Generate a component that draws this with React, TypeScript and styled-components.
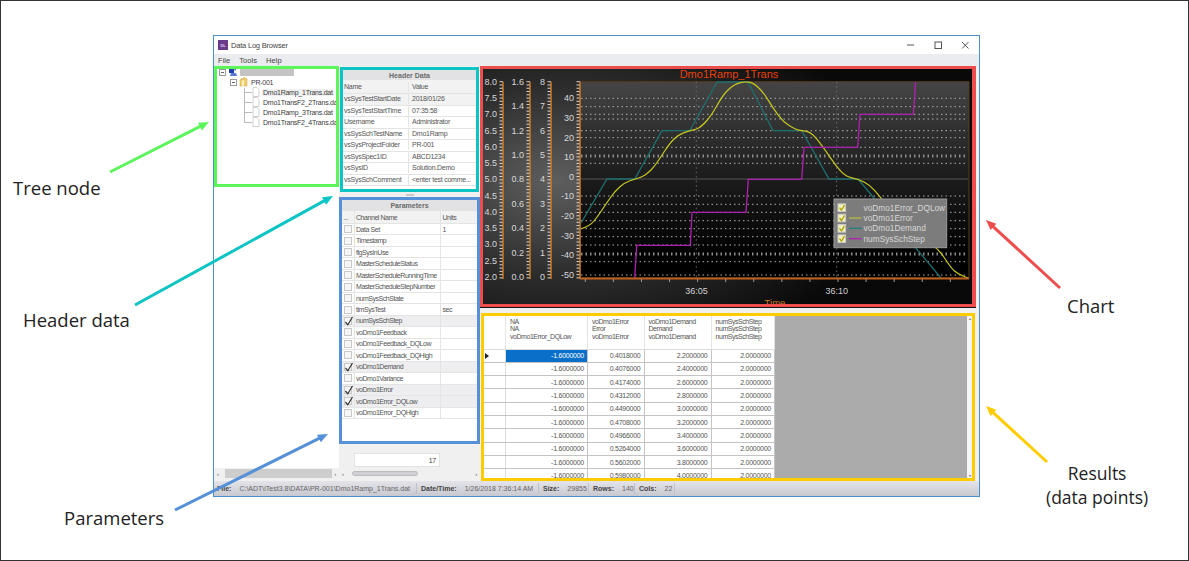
import { ReactElement } from 'react';
import styled, { createGlobalStyle } from 'styled-components';

const HEADER_ROWS = [
  ['vsSysTestStartDate', '2018/01/26'],
  ['vsSysTestStartTime', '07:35:58'],
  ['Username', 'Administrator'],
  ['vsSysSchTestName', 'Dmo1Ramp'],
  ['vsSysProjectFolder', 'PR-001'],
  ['vsSysSpec1ID', 'ABCD1234'],
  ['vsSysID', 'Solution.Demo'],
  ['vsSysSchComment', '<enter test comme...']
];

const PARAMETERS: { name: string; units?: string; checked?: boolean }[] = [
  { name: 'Data Set', units: '1' },
  { name: 'Timestamp' },
  { name: 'flgSysInUse' },
  { name: 'MasterScheduleStatus' },
  { name: 'MasterScheduleRunningTime' },
  { name: 'MasterScheduleStepNumber' },
  { name: 'numSysSchState' },
  { name: 'timSysTest', units: 'sec' },
  { name: 'numSysSchStep', checked: true },
  { name: 'voDmo1Feedback' },
  { name: 'voDmo1Feedback_DQLow' },
  { name: 'voDmo1Feedback_DQHigh' },
  { name: 'voDmo1Demand', checked: true },
  { name: 'voDmo1Variance' },
  { name: 'voDmo1Error', checked: true },
  { name: 'voDmo1Error_DQLow', checked: true },
  { name: 'voDmo1Error_DQHigh' }
];

const FILES = [
  'Dmo1Ramp_1Trans.dat',
  'Dmo1TransF2_2Trans.dat',
  'Dmo1Ramp_3Trans.dat',
  'Dmo1TransF2_4Trans.dat'
];

const ERRORS = ['0.4018000', '0.4076000', '0.4174000', '0.4312000', '0.4490000', '0.4708000', '0.4966000', '0.5264000', '0.5602000', '0.5980000'];
const DEMANDS = ['2.2000000', '2.4000000', '2.6000000', '2.8000000', '3.0000000', '3.2000000', '3.4000000', '3.6000000', '3.8000000', '4.0000000'];

const GlobalStyle = createGlobalStyle`
  html, body { margin: 0; padding: 0; background: #fff; }
  * { box-sizing: border-box; }
`;

const Stage = styled.div`
  position: relative;
  width: 1189px;
  height: 561px;
  padding: 34px 0 0 212px;
  border: 1px solid #333;
  background: #fff;
  overflow: hidden;
`;

const Window = styled.div`
  display: flex;
  flex-direction: column;
  width: 767px;
  height: 462px;
  border: 1px solid #4a90d0;
  background: #f0f0f0;
  font-family: 'Liberation Sans', Arial, sans-serif;
  font-size: 7px;
  letter-spacing: -0.25px;
  color: #555;
`;

const TitleBar = styled.div`
  display: flex;
  align-items: center;
  height: 18px;
  padding-left: 4px;
  background: #fff;
  font-size: 7.5px;
  letter-spacing: -0.2px;
  color: #444;
`;

const AppIcon = styled.div`
  display: flex;
  align-items: center;
  justify-content: center;
  width: 10px;
  height: 10px;
  margin-right: 3px;
  background: #6a3a8c;
  color: #e6d0f0;
  font-size: 4px;
  font-weight: bold;
`;

const WindowButtons = styled.div`
  display: flex;
  align-items: center;
  gap: 19.5px;
  margin-left: auto;
  padding-right: 10px;
`;

const MenuBar = styled.div`
  display: flex;
  gap: 9px;
  align-items: center;
  height: 12px;
  padding-left: 4px;
  background: #ebecf0;
  font-size: 7.6px;
  letter-spacing: 0;
  color: #444;
`;

const Body = styled.div`
  flex: 1;
  display: grid;
  grid-template-columns: 125px 141px 1fr;
  min-height: 0;
`;

const TreePane = styled.div`
  display: flex;
  flex-direction: column;
  background: #fff;
`;

const TreeBox = styled.div`
  height: 121px;
  border: 3px solid #5cf55c;
  overflow: hidden;
  white-space: nowrap;
`;

const TreeList = styled.div`
  margin-top: -2px;
`;

const TreeRow = styled.div<{ $level: number }>`
  position: relative;
  display: flex;
  align-items: center;
  gap: 2px;
  height: 10px;
  padding-left: ${(p) => p.$level}px;
  color: #3c3c3c;
  svg { flex-shrink: 0; }
`;

const TreeLabel = styled.span<{ $selected?: boolean }>`
  background: ${(p) => (p.$selected ? '#f0f0f0' : 'transparent')};
  padding: 0 1px;
`;

const Redacted = styled.div`
  width: 54px;
  height: 7px;
  margin-left: 1px;
  background: #c4c4c4;
`;

const TreeFill = styled.div`
  flex: 1;
`;

const ScrollBar = styled.div`
  display: flex;
  align-items: center;
  justify-content: space-between;
  height: 13px;
  padding: 0 3px 2px;
  background: #f0f0f0;
  color: #555;
  font-size: 6px;
`;

const ScrollThumb = styled.div<{ $width: number; $offset: number }>`
  width: ${(p) => p.$width}px;
  height: 9px;
  margin-right: auto;
  margin-left: ${(p) => p.$offset}px;
  background: #cdcdcd;
`;

const RoundThumb = styled(ScrollThumb)`
  height: 5px;
  border-radius: 3px;
  background: #d0d0d8;
  border: 1px solid #bbb;
`;

const MiddlePane = styled.div`
  display: flex;
  flex-direction: column;
  padding-top: 1px;
`;

const HeaderBox = styled.div`
  height: 125px;
  margin: 0 1px 0 1px;
  border: 3px solid #0cc4c4;
  background: #fff;
  overflow: hidden;
`;

const PanelTitle = styled.div<{ $height: number }>`
  display: flex;
  align-items: center;
  justify-content: center;
  height: ${(p) => p.$height}px;
  background: #e2e2e4;
  font-weight: bold;
  letter-spacing: 0;
  color: #6a6a6a;
`;

const HeadGrid = styled.div<{ $header?: boolean; $shaded?: boolean }>`
  display: grid;
  grid-template-columns: 65px 1fr;
  height: ${(p) => (p.$header ? '14px' : '11.5px')};
  align-items: center;
  border-bottom: 1px solid #e4e4e4;
  background: ${(p) => (p.$header || p.$shaded ? '#f2f2f2' : '#fff')};
  white-space: nowrap;
  span { padding-left: 1px; overflow: hidden; line-height: 10px; }
  span + span { padding-left: 3px; border-left: 1px solid #e4e4e4; }
`;

const Splitter = styled.div`
  display: flex;
  align-items: center;
  justify-content: center;
  height: 5px;
  &::after {
    content: '';
    width: 8px;
    height: 2px;
    background: #c8c8c8;
  }
`;

const ParamBox = styled.div`
  height: 247px;
  border: 3px solid #5590d8;
  background: #fff;
  overflow: hidden;
`;

const ParamGrid = styled.div<{ $header?: boolean; $checked?: boolean }>`
  display: grid;
  grid-template-columns: 11.5px 86.5px 1fr;
  align-items: center;
  height: ${(p) => (p.$header ? '13px' : '11.47px')};
  border-bottom: 1px solid #e4e4e4;
  background: ${(p) => (p.$header ? '#f2f2f2' : p.$checked ? '#eeeef0' : '#fff')};
  letter-spacing: -0.45px;
  white-space: nowrap;
  > * { height: 100%; display: flex; align-items: center; padding-left: 1.5px; }
  > * + * { border-left: 1px solid #e4e4e4; }
`;

const CheckCell = styled.div`
  justify-content: center;
  padding-left: 0 !important;
`;

const CheckBox = styled.div`
  width: 8px;
  height: 8px;
  border: 1px solid #c8c8c8;
  background: #f6f6f6;
  overflow: visible;
`;

const ParamFooter = styled.div`
  flex: 1;
  display: flex;
  flex-direction: column;
  justify-content: flex-end;
`;

const CountField = styled.div`
  width: 86px;
  height: 14px;
  margin: 0 0 1px 15px;
  padding: 3px 3px 0 0;
  background: #fff;
  border: 1px solid #e2e2e2;
  text-align: right;
  color: #444;
`;

const RightPane = styled.div`
  display: flex;
  flex-direction: column;
`;

const ChartBox = styled.div`
  width: 496px;
  height: 241px;
  border-style: solid;
  border-color: #ee4d4d;
  border-width: 3px 4px 3px 3px;
  background: radial-gradient(ellipse 330px 190px at 72px 112px, #5e5e5e 0%, #2c2c2c 50%, #090909 100%);
  box-shadow: 0 1px 0 #111;
  letter-spacing: 0;
  svg { display: block; }
`;

const DataBox = styled.div`
  display: flex;
  width: 494px;
  height: 168px;
  margin: 6px 0 0 1px;
  border-style: solid;
  border-color: #ffcc00;
  border-width: 3px;
  background: #ababab;
`;

const DataTable = styled.div`
  width: 291px;
  height: 100%;
  background: #fff;
  overflow: hidden;
`;

const DataRow = styled.div<{ $header?: boolean }>`
  display: grid;
  grid-template-columns: 22px 82px 56.5px 67px 63.5px;
  height: ${(p) => (p.$header ? '33.5px' : '13.3px')};
  border-bottom: 1px solid ${(p) => (p.$header ? '#dcdcdc' : '#c4c4c4')};
`;

const DataCell = styled.div<{ $selected?: boolean }>`
  display: flex;
  align-items: center;
  justify-content: flex-end;
  padding-right: 3px;
  border-right: 1px solid #c4c4c4;
  background: ${(p) => (p.$selected ? '#0a6fc9' : '#fff')};
  color: ${(p) => (p.$selected ? '#fff' : '#555')};
`;

const RowMarker = styled(DataCell)`
  justify-content: flex-start;
  padding-left: 1px;
  border-right: 1px solid #dcdcdc;
`;

const HeaderCell = styled.div`
  padding: 1.5px 0 0 4px;
  border-right: 1px solid #e4e4e4;
  line-height: 7.7px;
  letter-spacing: -0.45px;
  white-space: nowrap;
  background: #fff;
`;

const VerticalBar = styled.div`
  display: flex;
  flex-direction: column;
  justify-content: space-between;
  align-items: center;
  width: 5px;
  margin-left: auto;
  background: #f4f4f4;
  color: #666;
  font-size: 4px;
`;

const StatusBar = styled.div`
  display: flex;
  align-items: center;
  height: 15px;
  background: linear-gradient(#e4e4ea, #c8c8d0);
  color: #666;
  letter-spacing: 0;
  white-space: nowrap;
`;

const StatusItem = styled.div<{ $width: number }>`
  display: flex;
  gap: 8px;
  width: ${(p) => p.$width}px;
  height: 11px;
  align-items: center;
  padding-left: 4px;
  border-right: 1px solid #c0c0c8;
  b { color: #444; }
  &:first-child { padding-left: 3px; }
`;

const Overlay = styled.svg`
  position: absolute;
  inset: 0;
  pointer-events: none;
`;

const Callout = styled.div<{ $x: number; $y: number; $center?: boolean; $size?: number }>`
  position: absolute;
  left: ${(p) => p.$x}px;
  top: ${(p) => p.$y}px;
  font-family: 'Open Sans', sans-serif;
  font-size: ${(p) => p.$size ?? 18.5}px;
  line-height: 24px;
  color: #222;
  text-align: ${(p) => (p.$center ? 'center' : 'left')};
  white-space: nowrap;
`;

// rounds a list of page points into a path through their midpoints
const smooth = (pts: number[][]): string => {
  let d = `M${pts[0][0]} ${pts[0][1]}`;
  for (let i = 1; i < pts.length - 1; i++) {
    const mx = (pts[i][0] + pts[i + 1][0]) / 2;
    const my = (pts[i][1] + pts[i + 1][1]) / 2;
    d += ` Q${pts[i][0]} ${pts[i][1]} ${mx} ${my}`;
  }
  const last = pts[pts.length - 1];
  return `${d} L${last[0]} ${last[1]}`;
};

const ERROR_CURVE = [
  [581, 228.7], [590, 226], [598, 216], [606, 204], [615, 191], [625, 182.5], [635, 179], [642, 177], [648, 173],
  [654, 167], [660, 158], [670, 143], [678, 135], [689, 130.7], [696, 129.5], [702, 126], [711, 116], [723, 95],
  [731, 87], [738, 83], [745, 81.7], [753, 82.7], [763, 91.7], [773, 108], [783, 121.7], [796, 130], [804, 130.7],
  [812, 133], [823, 146.7], [836, 166], [846, 176.7], [858, 179], [870, 185], [880, 196.7], [900, 222], [920, 238],
  [938, 248], [951, 268], [958, 274], [968, 278]
];

const DEMAND_LINE = '581,223 607,179 634.7,179 662,130.7 689.7,130.7 717.3,82 748,82 773,130.7 801.7,130.7 829,179 858,179 941,278';
const STEP_LINE = '634.7,278 636.7,245.3 690.3,245.3 692,212.3 746,212.3 748.3,179.3 801.7,179.3 804,147.3 857.7,147.3 860,114.3 913.3,114.3 915.7,82';

const DOT_ROWS = [98.3, 106.7, 114.3, 119, 130.7, 137.7, 147.3, 163.3, 196, 204.3, 212.3, 220.7, 228.7, 236.7, 245, 261.7, 275];
const BOLD_ROWS = [156, 254];

const SCALES: { x: number; labels: string[] }[] = [
  { x: 503, labels: ['8.0', '7.5', '7.0', '6.5', '6.0', '5.5', '5.0', '4.5', '4.0', '3.5', '3.0', '2.5', '2.0'] },
  { x: 530, labels: ['1.6', '1.4', '1.2', '1.0', '0.8', '0.6', '0.4', '0.2', '0.0'] },
  { x: 551, labels: ['8', '7', '6', '5', '4', '3', '2', '1', '0'] }
];
const Y_LABELS = [40, 30, 20, 10, 0, -10, -20, -30, -40, -50];
const PLOT_TOP = 81.7;
const PLOT_BOTTOM = 278;

const AxisTicks = ({ x }: { x: number }): ReactElement => {
  const ticks = [];
  for (let y = PLOT_TOP; y <= PLOT_BOTTOM + 0.5; y += 3.27) {
    ticks.push(<line key={y} x1={x - 3.5} x2={x} y1={y} y2={y} stroke="#d8d8d8" strokeWidth="1" />);
  }
  return (
    <g>
      {ticks}
      <line x1={x} x2={x} y1={PLOT_TOP} y2={PLOT_BOTTOM + 1} stroke="#d07a20" strokeWidth="1.5" />
    </g>
  );
};

const ChartDrawing = (): ReactElement => (
  <svg width="489" height="235" viewBox="483 69 489 235" fontFamily="'Liberation Sans', Arial, sans-serif">
    <defs>
      <linearGradient id="plotFill" x1="0" y1="0" x2="0" y2="1">
        <stop offset="0" stopColor="#454545" />
        <stop offset="0.45" stopColor="#1f1f1f" />
        <stop offset="0.9" stopColor="#000" />
      </linearGradient>
    </defs>
    <text x="729" y="78" textAnchor="middle" fontSize="11" fill="#e8410a">Dmo1Ramp_1Trans</text>

    {SCALES.map((s) => (
      <g key={s.x}>
        <AxisTicks x={s.x} />
        {s.labels.map((label, i) => (
          <text
            key={label}
            x={s.x - 6}
            y={PLOT_TOP + 3 + (i * (PLOT_BOTTOM - PLOT_TOP - 1)) / (s.labels.length - 1)}
            textAnchor="end"
            fontSize="9"
            fill="#d8d8d8"
          >
            {label}
          </text>
        ))}
      </g>
    ))}

    <rect x="580" y={PLOT_TOP} width="389" height={PLOT_BOTTOM - PLOT_TOP} fill="url(#plotFill)" stroke="#5a3c1c" />
    <AxisTicks x={580} />
    {Y_LABELS.map((v) => (
      <text key={v} x="574" y={176.7 - 1.96 * v + 3} textAnchor="end" fontSize="9" fill="#d8d8d8">{v}</text>
    ))}

    {DOT_ROWS.map((y) => (
      <line key={y} x1="581" x2="968" y1={y} y2={y} stroke="#b0b0b0" strokeWidth="1" strokeDasharray="1.5 3" />
    ))}
    {BOLD_ROWS.map((y) => (
      <line key={y} x1="581" x2="968" y1={y} y2={y} stroke="#8c8c8c" strokeWidth="3" strokeDasharray="1.5 3" />
    ))}
    <line x1="581" x2="968" y1="179" y2="179" stroke="#555" />
    {[696.3, 836.7].map((x) => (
      <line key={x} x1={x} x2={x} y1={PLOT_TOP} y2={PLOT_BOTTOM} stroke="#6a6a6a" strokeDasharray="1.5 3" />
    ))}

    <polyline points={DEMAND_LINE} fill="none" stroke="#1f6e6e" strokeWidth="1.3" />
    <path d={smooth(ERROR_CURVE)} fill="none" stroke="#c8c820" strokeWidth="1.2" />
    <polyline points={STEP_LINE} fill="none" stroke="#b020b0" strokeWidth="1.3" />

    <line x1="580" x2="969" y1="278.5" y2="278.5" stroke="#c0601e" strokeWidth="2" />
    {Array.from({ length: 14 }, (_, i) => 585.3 + i * 28.08).map((x) => (
      <line key={x} x1={x} x2={x} y1="279" y2="282" stroke="#999" />
    ))}
    <text x="696.5" y="294" textAnchor="middle" fontSize="9" fill="#d0d0d0">36:05</text>
    <text x="836.7" y="294" textAnchor="middle" fontSize="9" fill="#d0d0d0">36:10</text>
    <text x="775" y="306" textAnchor="middle" fontSize="9.5" fill="#d07a20">Time</text>

    <rect x="834" y="199" width="112.7" height="48.7" fill="#7c7c7c" stroke="#9a9a9a" />
    {[
      { name: 'voDmo1Error_DQLow', color: 'none' },
      { name: 'voDmo1Error', color: '#b8b840' },
      { name: 'voDmo1Demand', color: '#1f8080' },
      { name: 'numSysSchStep', color: '#b020b0' }
    ].map((item, i) => {
      const y = 207.7 + i * 10.33;
      return (
        <g key={item.name}>
          <rect x="838" y={y - 3.8} width="7.6" height="7.6" fill="#f0f0c0" stroke="#c8c8c8" />
          <path d={`M839.5 ${y} l2 2.5 l3 -5`} fill="none" stroke="#b0a000" strokeWidth="1.3" />
          <line x1="849" x2="861.5" y1={y} y2={y} stroke={item.color} strokeWidth="1.3" />
          <text x="863.5" y={y + 3} fontSize="8.3" fill="#d8d8d8">{item.name}</text>
        </g>
      );
    })}
  </svg>
);

const Expander = (): ReactElement => (
  <svg width="7" height="7" viewBox="0 0 7 7">
    <rect x="0.5" y="0.5" width="6" height="6" fill="#fff" stroke="#999" />
    <line x1="2" x2="5" y1="3.5" y2="3.5" stroke="#666" />
  </svg>
);

const Computer = (): ReactElement => (
  <svg width="9" height="9" viewBox="0 0 9 9">
    <path d="M1 1h5v4H1z" fill="#1c3fb0" />
    <path d="M3 5h5l1 3H2z" fill="#5a78d8" />
    <path d="M6 0l2 1-1 2z" fill="#16247a" />
  </svg>
);

const Folder = (): ReactElement => (
  <svg width="9" height="10" viewBox="0 0 9 10">
    <path d="M1 9V3l2-2 1 2 1-3 3 2v7z" fill="#f0cf6c" stroke="#c9a040" strokeWidth="0.5" />
    <path d="M3 9V4l2-1v6z" fill="#fff2c0" />
  </svg>
);

const FileIcon = (): ReactElement => (
  <svg width="8" height="10" viewBox="0 0 8 10">
    <path d="M1 0.5h4l2 2v7H1z" fill="#fff" stroke="#d0d0d0" />
  </svg>
);

const Tick = (): ReactElement => (
  <svg width="8" height="8" viewBox="0 0 8 8" style={{ display: 'block', overflow: 'visible' }}>
    <path d="M0.5 4 L2.8 6.8 L7.5 -1" fill="none" stroke="#333" strokeWidth="1.2" />
  </svg>
);

const Connector = styled.span<{ $x: number; $h: number }>`
  position: absolute;
  left: ${(p) => p.$x}px;
  bottom: 4.5px;
  width: 8px;
  height: ${(p) => p.$h}px;
  border-left: 1px solid #bbb;
  border-bottom: 1px solid #bbb;
`;

const Arrow = ({ x1, y1, x2, y2, color }: { x1: number; y1: number; x2: number; y2: number; color: string }): ReactElement => {
  const a = Math.atan2(y2 - y1, x2 - x1);
  const len = 11;
  const p = (t: number) => `${x2 - len * Math.cos(a + t)},${y2 - len * Math.sin(a + t)}`;
  return (
    <g>
      <line x1={x1} y1={y1} x2={x2 - 6 * Math.cos(a)} y2={y2 - 6 * Math.sin(a)} stroke={color} strokeWidth="3" />
      <polygon points={`${x2},${y2} ${p(0.4)} ${p(-0.4)}`} fill={color} />
    </g>
  );
};

const App = (): ReactElement => (
  <Stage>
    <GlobalStyle />
    <Window>
      <TitleBar>
        <AppIcon>DL</AppIcon>
        Data Log Browser
        <WindowButtons>
          <svg width="8" height="8" viewBox="0 0 8 8"><path d="M1 4h7" stroke="#555" /></svg>
          <svg width="8" height="8" viewBox="0 0 8 8"><rect x="1" y="1" width="6.5" height="6.5" fill="none" stroke="#555" /></svg>
          <svg width="8" height="8" viewBox="0 0 8 8"><path d="M1 1l6.5 6.5M7.5 1L1 7.5" stroke="#555" /></svg>
        </WindowButtons>
      </TitleBar>
      <MenuBar>
        <span>File</span>
        <span>Tools</span>
        <span>Help</span>
      </MenuBar>
      <Body>
        <TreePane>
          <TreeBox>
            <TreeList>
              <TreeRow $level={2}>
                <Expander />
                <Computer />
                <Redacted />
              </TreeRow>
              <TreeRow $level={13}>
                <Expander />
                <Folder />
                <TreeLabel>PR-001</TreeLabel>
              </TreeRow>
              {FILES.map((file, i) => (
                <TreeRow key={file} $level={35}>
                  <Connector $x={27} $h={i === 0 ? 5 : 10} />
                  <FileIcon />
                  <TreeLabel $selected={i === 0}>{file}</TreeLabel>
                </TreeRow>
              ))}
            </TreeList>
          </TreeBox>
          <TreeFill />
          <ScrollBar>
            ‹<ScrollThumb $width={107} $offset={6} />›
          </ScrollBar>
        </TreePane>

        <MiddlePane>
          <HeaderBox>
            <PanelTitle $height={10}>Header Data</PanelTitle>
            <HeadGrid $header>
              <span>Name</span>
              <span>Value</span>
            </HeadGrid>
            {HEADER_ROWS.map(([name, value], i) => (
              <HeadGrid key={name} $shaded={i === 0}>
                <span>{name}</span>
                <span>{value}</span>
              </HeadGrid>
            ))}
          </HeaderBox>
          <Splitter />
          <ParamBox>
            <PanelTitle $height={11}>Parameters</PanelTitle>
            <ParamGrid $header>
              <span>...</span>
              <span>Channel Name</span>
              <span>Units</span>
            </ParamGrid>
            {PARAMETERS.map((param) => (
              <ParamGrid key={param.name} $checked={param.checked}>
                <CheckCell>
                  <CheckBox>{param.checked && <Tick />}</CheckBox>
                </CheckCell>
                <span>{param.name}</span>
                <span>{param.units}</span>
              </ParamGrid>
            ))}
          </ParamBox>
          <ParamFooter>
            <CountField>17</CountField>
            <ScrollBar>
              ‹<RoundThumb $width={66} $offset={8} />›
            </ScrollBar>
          </ParamFooter>
        </MiddlePane>

        <RightPane>
          <ChartBox>
            <ChartDrawing />
          </ChartBox>
          <DataBox>
            <DataTable>
              <DataRow $header>
                <HeaderCell />
                <HeaderCell>NA<br />NA<br />voDmo1Error_DQLow</HeaderCell>
                <HeaderCell>voDmo1Error<br />Error<br />voDmo1Error</HeaderCell>
                <HeaderCell>voDmo1Demand<br />Demand<br />voDmo1Demand</HeaderCell>
                <HeaderCell>numSysSchStep<br />numSysSchStep<br />numSysSchStep</HeaderCell>
              </DataRow>
              {ERRORS.map((err, i) => (
                <DataRow key={err}>
                  <RowMarker>
                    {i === 0 && (
                      <svg width="4" height="6" viewBox="0 0 4 6"><path d="M0 0l4 3-4 3z" fill="#222" /></svg>
                    )}
                  </RowMarker>
                  <DataCell $selected={i === 0}>-1.6000000</DataCell>
                  <DataCell>{err}</DataCell>
                  <DataCell>{DEMANDS[i]}</DataCell>
                  <DataCell>2.0000000</DataCell>
                </DataRow>
              ))}
            </DataTable>
            <VerticalBar>
              <span>▴</span>
              <span>▾</span>
            </VerticalBar>
          </DataBox>
        </RightPane>
      </Body>
      <StatusBar>
        <StatusItem $width={203}>
          <b>File:</b>
          <span>C:\ADT\iTest3.8\DATA\PR-001\Dmo1Ramp_1Trans.dat</span>
        </StatusItem>
        <StatusItem $width={122}>
          <b>Date/Time:</b>
          <span>1/26/2018 7:36:14 AM</span>
        </StatusItem>
        <StatusItem $width={50}>
          <b>Size:</b>
          <span>29855</span>
        </StatusItem>
        <StatusItem $width={46}>
          <b>Rows:</b>
          <span>140</span>
        </StatusItem>
        <StatusItem $width={40}>
          <b>Cols:</b>
          <span>22</span>
        </StatusItem>
      </StatusBar>
    </Window>

    <Overlay width="1189" height="561" viewBox="1 1 1189 561">
      <Arrow x1={110} y1={172} x2={209} y2={122} color="#5cf55c" />
      <Arrow x1={135} y1={305} x2={333} y2={196} color="#0cc4c4" />
      <Arrow x1={175} y1={510} x2={328} y2={434} color="#5590d8" />
      <Arrow x1={1060} y1={288} x2={986} y2={220} color="#ee4d4d" />
      <Arrow x1={1047} y1={462} x2={986} y2={406} color="#ffcc00" />
    </Overlay>
    <Callout $x={12} $y={175}>Tree node</Callout>
    <Callout $x={22} $y={307}>Header data</Callout>
    <Callout $x={63} $y={505}>Parameters</Callout>
    <Callout $x={1066} $y={293}>Chart</Callout>
    <Callout $x={1045} $y={460} $center $size={17.5}>Results<br />(data points)</Callout>
  </Stage>
);

export default App;
